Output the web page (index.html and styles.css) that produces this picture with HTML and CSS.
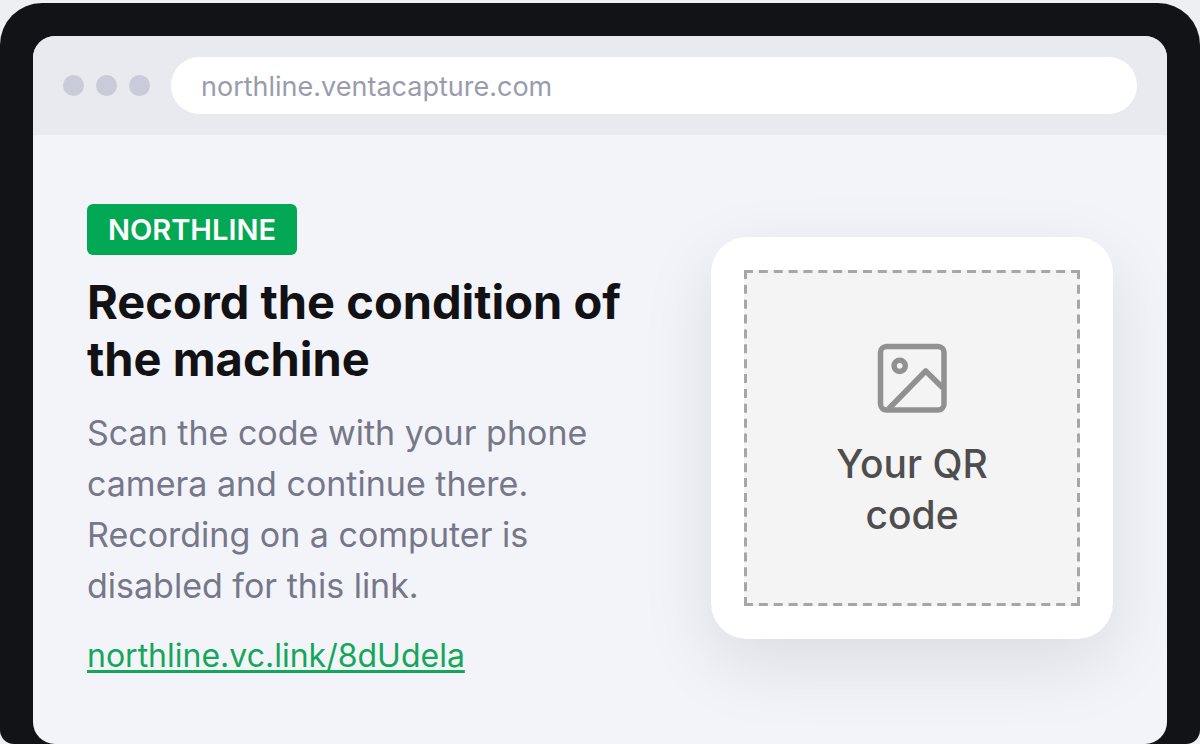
FILE: index.html
```html
<!DOCTYPE html>
<html lang="en">
<head>
<meta charset="utf-8">
<meta name="viewport" content="width=device-width, initial-scale=1">
<title>Northline – Record the condition of the machine</title>
<link rel="stylesheet" href="styles.css">
</head>
<body>
<div class="device">
  <div class="screen">
    <header class="toolbar">
      <div class="dots"><span class="dot"></span><span class="dot"></span><span class="dot"></span></div>
      <input class="address" type="text" aria-label="Address" value="northline.ventacapture.com" readonly>
    </header>
    <main class="content">
      <section class="intro">
        <span class="brand">NORTHLINE</span>
        <h1 class="title">Record the condition of the machine</h1>
        <p class="text">Scan the code with your phone camera and continue there. Recording on a computer is disabled for this link.</p>
        <a class="link" href="#">northline.vc.link/8dUdela</a>
      </section>
      <section class="card">
        <div class="placeholder">
          <svg class="dashes" viewBox="0 0 336 336" aria-hidden="true">
            <path d="M0 1.5H336M0 334.5H336M1.5 0V336M334.5 0V336"/>
          </svg>
          <svg class="icon" viewBox="0 0 72 72" aria-hidden="true">
            <rect x="4.500" y="4.500" width="63.500" height="63.500" rx="6"/>
            <circle cx="23.700" cy="23.800" r="5.600"/>
            <path d="M12.500 67L49.700 29L67 46"/>
          </svg>
          <p class="caption">Your QR code</p>
        </div>
      </section>
    </main>
  </div>
</div>
</body>
</html>
```
FILE: styles.css
```css
* { box-sizing: border-box; }

body {
  margin: 0;
  min-height: 100vh;
  padding-top: 3px;
  display: flex;
  background: #edeff3;
  font-family: Inter, "Liberation Sans", sans-serif;
}

.device {
  flex: 1;
  display: flex;
  padding: 33px 33px 0;
  background: #121317;
  border-radius: 42px 42px 14px 14px;
}

.screen {
  flex: 1;
  display: flex;
  flex-direction: column;
  overflow: hidden;
  background: #f3f4f9;
  border-radius: 22px;
}

.toolbar {
  display: flex;
  align-items: center;
  gap: 21px;
  padding: 21px 30px;
  background: #e9eaef;
}

.dots { display: flex; gap: 12px; }

.dot {
  width: 21px;
  height: 21px;
  border-radius: 50%;
  background: #c9cbd8;
}

.address {
  flex: 1;
  min-width: 0;
  height: 57px;
  padding: 2px 30px 0;
  border: 0;
  border-radius: 29px;
  background: #fff;
  color: #9a9cad;
  font: 27px Inter, sans-serif;
}

.content {
  flex: 1;
  display: flex;
  align-items: center;
  justify-content: space-between;
  gap: 54px;
  padding: 0 54px 3px;
}

.intro {
  flex: 0 1 550px;
  display: flex;
  flex-direction: column;
  align-items: flex-start;
  padding-top: 4px;
}

.brand {
  padding: 0 21px;
  border-radius: 6px;
  background: #03a854;
  color: #fff;
  font-size: 29px;
  font-weight: 600;
  line-height: 51px;
}

.title {
  margin: 18px 0 0;
  color: #121214;
  font-size: 47px;
  font-weight: 700;
  line-height: 57px;
}

.text {
  margin: 20px 0 0;
  color: #767789;
  font-size: 34px;
  line-height: 51px;
}

.link {
  margin-top: 23px;
  color: #14a75a;
  font-size: 32px;
  line-height: 43px;
  text-decoration-thickness: 3px;
  text-underline-offset: 3px;
  text-decoration-skip-ink: none;
}

.card {
  flex: none;
  padding: 33px;
  border-radius: 36px;
  background: #fff;
  box-shadow: 0 24px 72px rgba(18, 19, 35, 0.1);
}

.placeholder {
  position: relative;
  display: flex;
  flex-direction: column;
  align-items: center;
  justify-content: center;
  gap: 24px;
  width: 336px;
  aspect-ratio: 1;
  padding: 6px 72px 0;
  background: #f4f4f4;
}

.dashes {
  position: absolute;
  inset: 0;
  fill: none;
  stroke: #a6a6a6;
  stroke-width: 3;
  stroke-dasharray: 9 5.864;
}

.icon {
  width: 72px;
  height: 72px;
  fill: none;
  stroke: #919191;
  stroke-width: 5.5;
  stroke-linejoin: round;
}

.caption {
  margin: 0;
  color: #4e4e4e;
  font-size: 39px;
  font-weight: 500;
  line-height: 51px;
  text-align: center;
}
```
